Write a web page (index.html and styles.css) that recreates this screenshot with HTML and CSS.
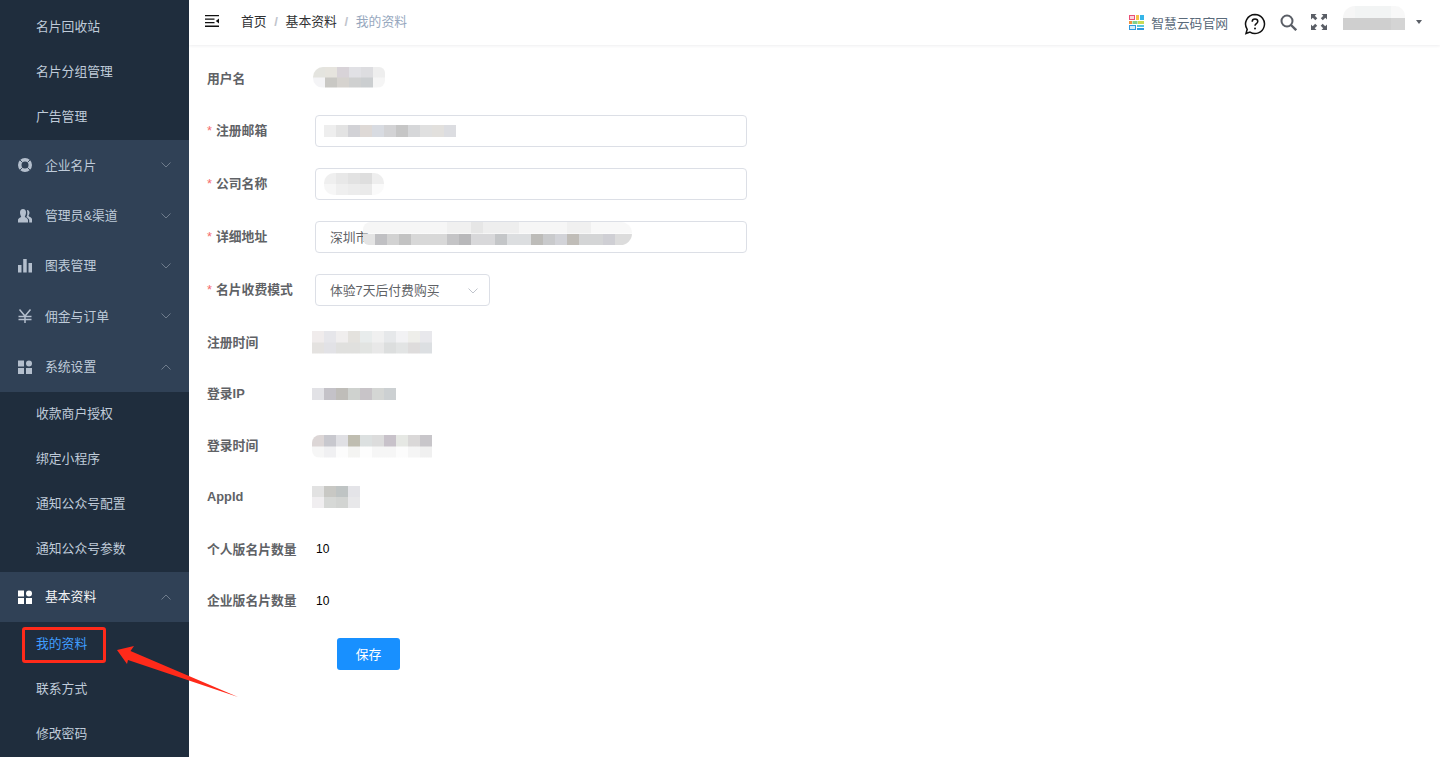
FILE: index.html
```html
<!DOCTYPE html>
<html lang="zh-CN">
<head>
    <meta charset="UTF-8">
    <title>我的资料</title>
    <link rel="stylesheet" href="styles.css">
</head>
<body>
    <!-- 侧边栏 -->
    <aside class="sidebar">
        <ul class="sub-menu sub-menu-first">
            <li>名片回收站</li>
            <li>名片分组管理</li>
            <li>广告管理</li>
        </ul>
        <div class="menu-title">
            <svg class="menu-icon" viewBox="0 0 14 14"><path fill="#b4bfcd" fill-rule="evenodd" d="M7 0a7 7 0 1 1 0 14A7 7 0 0 1 7 0zm0 3.500a3.500 3.500 0 1 0 0 7 3.500 3.500 0 0 0 0-7z"/><path stroke="#304156" stroke-width="0.9" d="M1.500 1.500l3 3M12.500 1.500l-3 3M1.500 12.500l3-3M12.500 12.500l-3-3"/></svg>
            <span>企业名片</span>
            <svg class="menu-arrow" viewBox="0 0 10 6"><path d="M.5.500L5 5 9.500.5"/></svg>
        </div>
        <div class="menu-title">
            <svg class="menu-icon" viewBox="0 0 14 14"><path fill="#b4bfcd" d="M5 0c2 0 3 1.500 3 3.500S7.200 6.800 6.800 7.600c0 1 3 1.400 3.200 3.400v2.500H0V11c.2-2 3.200-2.400 3.200-3.400C2.800 6.800 2 5.500 2 3.500S3 0 5 0zM9 1c1.800.2 2.600 1.500 2.500 3-.1 1.200-.7 2-1 2.700 0 .9 2.800 1.300 3.500 3.300v3.500h-2.800V11c-.3-1.400-2-2.300-2.800-3 .7-1 1.300-2.700.6-7z"/></svg>
            <span>管理员&amp;渠道</span>
            <svg class="menu-arrow" viewBox="0 0 10 6"><path d="M.5.500L5 5 9.500.5"/></svg>
        </div>
        <div class="menu-title">
            <svg class="menu-icon" viewBox="0 0 14 14"><path fill="#b4bfcd" d="M0 6h3.500v7.500H0zM5.200 0h3.500v13.500H5.200zM10.500 4H14v9.500h-3.500z"/></svg>
            <span>图表管理</span>
            <svg class="menu-arrow" viewBox="0 0 10 6"><path d="M.5.500L5 5 9.500.5"/></svg>
        </div>
        <div class="menu-title">
            <svg class="menu-icon" viewBox="0 0 14 14"><path fill="none" stroke="#b4bfcd" stroke-width="1.500" d="M1.500.5L7 7 12.500.5M7 7v7M.5 7.500h13M.5 10.500h13"/></svg>
            <span>佣金与订单</span>
            <svg class="menu-arrow" viewBox="0 0 10 6"><path d="M.5.500L5 5 9.500.5"/></svg>
        </div>
        <div class="menu-title">
            <svg class="menu-icon" viewBox="0 0 14 14"><path fill="#b4bfcd" d="M0 .5h6v6H0zM0 8h6v6H0zM8 8h6v6H8z"/><circle fill="#b4bfcd" cx="11" cy="3.500" r="3"/></svg>
            <span>系统设置</span>
            <svg class="menu-arrow" viewBox="0 0 10 6"><path d="M.5 5.500L5 1l4.500 4.500"/></svg>
        </div>
        <ul class="sub-menu">
            <li>收款商户授权</li>
            <li>绑定小程序</li>
            <li>通知公众号配置</li>
            <li>通知公众号参数</li>
        </ul>
        <div class="menu-title menu-title-active">
            <svg class="menu-icon" viewBox="0 0 14 14"><path fill="#fff" d="M0 .5h6v6H0zM0 8h6v6H0zM8 8h6v6H8z"/><circle fill="#fff" cx="11" cy="3.500" r="3"/></svg>
            <span>基本资料</span>
            <svg class="menu-arrow" viewBox="0 0 10 6"><path d="M.5 5.500L5 1l4.500 4.500"/></svg>
        </div>
        <ul class="sub-menu">
            <li class="active">我的资料</li>
            <li>联系方式</li>
            <li>修改密码</li>
        </ul>
    </aside>

    <div class="main">
        <!-- 顶部栏 -->
        <header class="navbar">
            <svg class="hamburger" viewBox="0 0 14 12"><path fill="#111" d="M0 0h14v1.300H0zM0 3.500h9.500v1.300H0zM0 7h9.500v1.300H0zM0 10.500h14V12H0zM14 3.500v5L10.800 6z"/></svg>
            <nav class="breadcrumb">
                <span class="crumb">首页</span>
                <span class="sep">/</span>
                <span class="crumb">基本资料</span>
                <span class="sep">/</span>
                <span class="crumb crumb-last">我的资料</span>
            </nav>
            <div class="navbar-right">
                <a class="site-link">
                    <svg class="site-logo" viewBox="0 0 15 15">
                        <rect x="0.500" y="0.500" width="5" height="4" fill="#fbd3dd" stroke="#ea4f76"/>
                        <rect x="7" y="0" width="3" height="5" fill="#f4c04a"/>
                        <rect x="11" y="0" width="4" height="5" fill="#35b5e8"/>
                        <rect x="0" y="6" width="3" height="3" fill="#f0913f"/>
                        <rect x="3.500" y="6" width="5" height="3" fill="#7fcf8c"/>
                        <rect x="9" y="6" width="6" height="3" fill="#c9da55"/>
                        <rect x="0.500" y="10.500" width="6" height="4" fill="#d3ecfa" stroke="#3199dd"/>
                        <rect x="8" y="10" width="7" height="2" fill="#58c6dc"/>
                        <rect x="8" y="13" width="7" height="2" fill="#3199dd"/>
                    </svg>
                    智慧云码官网
                </a>
                <svg class="help-icon" viewBox="0 0 22 22"><path fill="none" stroke="#111" stroke-width="1.500" d="M11 1.500a9.500 9.500 0 1 1-5 17.600L2 20.500l1.200-4.200A9.500 9.500 0 0 1 11 1.500z"/><path fill="none" stroke="#111" stroke-width="1.500" d="M8.200 8.700c0-1.700 1.300-2.700 2.800-2.700s2.800 1 2.800 2.500c0 2-2.800 2.300-2.800 4.300"/><circle cx="11" cy="15.600" r="1" fill="#111"/></svg>
                <svg class="search-icon" viewBox="0 0 17 17"><circle cx="7" cy="7" r="5.500" fill="none" stroke="#5a5e66" stroke-width="2"/><path stroke="#5a5e66" stroke-width="2.400" d="M11 11l5.200 5.200"/></svg>
                <svg class="full-icon" viewBox="0 0 16 16"><path fill="#5a5e66" d="M0 0h5.500L3.800 1.700l2.500 2.500-2 2-2.500-2.500L0 5.500zM16 0v5.500l-1.700-1.700-2.500 2.500-2-2 2.500-2.500L10.500 0zM0 16v-5.500l1.700 1.700 2.500-2.500 2 2-2.500 2.500L5.500 16zM16 16h-5.500l1.700-1.700-2.500-2.500 2-2 2.500 2.500 1.800-1.800z"/></svg>
                <div class="user-box">
                    <div class="mosaic mosaic-user"></div>
                    <span class="caret"></span>
                </div>
            </div>
        </header>

        <!-- 表单 -->
        <form class="info-form">
            <div class="form-row">
                <label class="form-label">用户名</label>
                <div class="mosaic mosaic-name"></div>
            </div>
            <div class="form-row">
                <label class="form-label required">注册邮箱</label>
                <div class="form-input"><div class="mosaic mosaic-mail"></div></div>
            </div>
            <div class="form-row">
                <label class="form-label required">公司名称</label>
                <div class="form-input"><div class="mosaic mosaic-company"></div></div>
            </div>
            <div class="form-row">
                <label class="form-label required">详细地址</label>
                <div class="form-input">深圳市<div class="mosaic mosaic-address"></div></div>
            </div>
            <div class="form-row form-row-last-input">
                <label class="form-label required">名片收费模式</label>
                <div class="form-input form-select">
                    体验7天后付费购买
                    <svg class="select-arrow" viewBox="0 0 10 6"><path d="M.5.500L5 5 9.500.5"/></svg>
                </div>
            </div>
            <div class="form-row form-row-text">
                <label class="form-label">注册时间</label>
                <div class="mosaic mosaic-regtime"></div>
            </div>
            <div class="form-row form-row-text">
                <label class="form-label">登录IP</label>
                <div class="mosaic mosaic-ip"></div>
            </div>
            <div class="form-row form-row-text">
                <label class="form-label">登录时间</label>
                <div class="mosaic mosaic-logintime"></div>
            </div>
            <div class="form-row form-row-text">
                <label class="form-label">AppId</label>
                <div class="mosaic mosaic-appid"></div>
            </div>
            <div class="form-row form-row-text">
                <label class="form-label">个人版名片数量</label>
                <span class="form-value">10</span>
            </div>
            <div class="form-row">
                <label class="form-label">企业版名片数量</label>
                <span class="form-value">10</span>
            </div>
            <button type="button" class="save-btn">保存</button>
        </form>
    </div>

    <!-- 截图上的红色标注 -->
    <div class="mark-box"></div>
    <svg class="mark-arrow" viewBox="0 0 130 62"><polygon fill="#ff2a1a" points="0,15 17,11 13.500,16 121,62 11,25 10,29"/></svg>
</body>
</html>
```

FILE: styles.css
```css
/* リセット */
* {
    box-sizing: border-box;
    margin: 0;
    padding: 0;
}
html, body {
    height: 757px;
    overflow: hidden;
}
body {
    display: flex;
    font-family: "Liberation Sans", "Noto Sans CJK SC", sans-serif;
    font-size: 12.8px;
    background-color: #fff;
    color: #606266;
}

/* sidebar */
.sidebar {
    width: 189px;
    flex-shrink: 0;
    height: 757px;
    overflow: hidden;
    background-color: #1f2d3d;
    color: #bfcbd9;
}
.sub-menu {
    list-style: none;
    background-color: #1f2d3d;
}
.sub-menu-first {
    padding-top: 5px;
}
.sub-menu li {
    height: 45px;
    line-height: 43px;
    padding-left: 36px;
}
.sub-menu li.active {
    color: #409eff;
}
.menu-title {
    display: flex;
    align-items: center;
    height: 50.4px;
    padding: 0 18px 0 18px;
    background-color: #304156;
}
.menu-title-active {
    height: 50px;
    color: #f4f4f5;
}
.menu-title span {
    margin: 0 0 2px 13px;
    flex: 1;
}
.menu-icon {
    width: 14px;
    height: 14px;
}
.menu-arrow {
    width: 10px;
    height: 6px;
}
.menu-arrow path,
.select-arrow path {
    fill: none;
    stroke: #6f7c8c;
    stroke-width: 1;
}

/* navbar */
.main {
    flex: 1;
    min-width: 0;
}
.navbar {
    display: flex;
    align-items: center;
    height: 45px;
    padding: 0 0 3px 16px;
    background-color: #fff;
    box-shadow: 0 1px 3px rgba(0, 21, 41, 0.07);
}
.hamburger {
    width: 14px;
    height: 12px;
}
.breadcrumb {
    display: flex;
    align-items: center;
    margin: 0 0 2px 22px;
    color: #303133;
}
.sep {
    margin: 0 7.7px;
    padding-top: 2px;
    font-size: 13px;
    font-weight: 700;
    color: #c0c4cc;
}
.crumb-last {
    color: #97a8be;
}
.navbar-right {
    display: flex;
    align-items: center;
    margin: 2px 0 0 auto;
}
.site-link {
    display: flex;
    align-items: center;
    color: #5a6a7a;
}
.site-logo {
    width: 15px;
    height: 15px;
    margin-right: 7px;
}
.help-icon {
    width: 22px;
    height: 22px;
    margin-left: 16px;
    margin-top: 4px;
}
.search-icon {
    width: 17px;
    height: 17px;
    margin-left: 14px;
}
.full-icon {
    width: 16px;
    height: 16px;
    margin-left: 14px;
}
.user-box {
    display: flex;
    align-items: center;
    margin-left: 16px;
    padding-right: 18px;
}
.caret {
    margin-left: 11px;
    border-top: 4px solid #5a5e66;
    border-left: 3.5px solid transparent;
    border-right: 3.5px solid transparent;
}

/* form */
.info-form {
    padding: 17px 0 0 18px;
}
.form-row {
    display: flex;
    align-items: center;
    height: 32px;
    margin-bottom: 21px;
}
.form-row-last-input {
    margin-bottom: 20px;
}
.form-row-text {
    margin-bottom: 19.8px;
}
.form-label {
    width: 108px;
    flex-shrink: 0;
    font-weight: 700;
    color: #606266;
    position: relative;
    top: -1px;
}
.required {
    top: -2px;
}
.required::before {
    content: "*";
    margin-right: 4px;
    color: #f56c6c;
    font-weight: 400;
}
.form-input {
    display: flex;
    align-items: center;
    width: 432px;
    height: 32px;
    padding: 0 0 2px 14px;
    border: 1px solid #dcdfe6;
    border-radius: 4px;
    background-color: #fff;
    color: #606266;
}
.form-select {
    width: 175px;
    justify-content: space-between;
    padding-right: 11px;
}
.select-arrow {
    width: 10px;
    height: 6px;
    margin-top: 3px;
}
.select-arrow path {
    stroke: #c0c4cc;
}
.form-value {
    font-size: 12px;
    color: #000;
    margin-left: 1px;
}
.save-btn {
    display: block;
    width: 63px;
    height: 32px;
    margin-left: 130px;
    border: none;
    border-radius: 3px;
    background-color: #1890ff;
    color: #fff;
    font-family: inherit;
    font-size: 12.8px;
}

/* モザイク */
.mosaic {
    flex-shrink: 0;
    background-repeat: no-repeat;
    background-position: 0 0, 0 100%;
    background-size: 100% 50%;
}
.mosaic-name {
    width: 72px;
    height: 21px;
    margin: -2px 0 0 -2px;
    border-radius: 10px 6px 8px 10px;
    background-image:
        linear-gradient(90deg, #e4e4df 0 12px, #e6e4de 0 24px, #d8d3d8 0 36px, #e1e1e5 0 48px, #dddde0 0 60px, #eeeeee 0 72px),
        linear-gradient(90deg, #f4f4f6 0 12px, #c9c8c4 0 24px, #d6d3cf 0 36px, #cfd0d0 0 48px, #cbced0 0 60px, #f5f5f5 0 72px);
}
.mosaic-mail {
    width: 132px;
    height: 12px;
    margin: 2px 0 0 -6px;
    background-image: linear-gradient(90deg, #eeeeee 0 12px, #e3e3e3 0 24px, #d2d2d6 0 36px, #ded9d6 0 48px, #d8dbe1 0 60px, #d3d3d5 0 72px, #c6c6c6 0 84px, #d6d7d9 0 96px, #e0e0e0 0 108px, #e2e0dd 0 120px, #dcdde1 0 132px);
    background-size: 100% 100%;
}
.mosaic-company {
    width: 60px;
    height: 22px;
    margin: 1px 0 0 -6px;
    border-radius: 10px;
    background-image:
        linear-gradient(90deg, #efefef 0 12px, #e8e8e8 0 24px, #e2e2e2 0 36px, #dedede 0 48px, #eeeeee 0 60px),
        linear-gradient(90deg, #f6f6f6 0 12px, #efefef 0 24px, #ececec 0 36px, #eaeaea 0 48px, #fafafa 0 60px);
}
.mosaic-address {
    width: 269px;
    height: 23px;
    margin: -5px 0 0 -5.4px;
    border-radius: 8px 12px 12px 6px;
    background-image:
        linear-gradient(90deg, #f6f6f6 0 84px, #f0f0f0 0 108px, #e6e6e6 0 120px, #eeeeee 0 156px, #f6f6f6 0 204px, #f0f0f0 0 228px, #f8f8f8 0 269px),
        linear-gradient(90deg, #e4e4e4 0 12px, #c0c0c3 0 24px, #d2d2d2 0 36px, #c3c3c3 0 48px, #d8d8d8 0 84px, #c4c4c6 0 96px, #b8b8ba 0 108px, #d8d8da 0 132px, #c4c6c8 0 144px, #dcdee0 0 168px, #bdbcb9 0 180px, #c9cacc 0 192px, #d2d3d8 0 204px, #c0bdb8 0 216px, #d4d5d6 0 240px, #cfcfd4 0 252px, #dcdcdc 0 269px);
}
.mosaic-regtime,
.mosaic-logintime {
    width: 120px;
    height: 23px;
    margin-left: -3px;
}
.mosaic-regtime {
    background-image:
        linear-gradient(90deg, #f0ecec 0 12px, #e6e6ea 0 24px, #f0eeee 0 36px, #e4e2de 0 48px, #e8ecec 0 60px, #f0f0f0 0 72px, #e6e8ea 0 84px, #f2f2f4 0 96px, #eeeeea 0 108px, #e8e8ec 0 120px),
        linear-gradient(90deg, #e4e2e0 0 12px, #e2e2e6 0 24px, #e0e0de 0 48px, #e2e4e2 0 60px, #e8e8e8 0 72px, #dcdede 0 84px, #e2e4e4 0 96px, #dedcdc 0 108px, #dcdfe2 0 120px);
}
.mosaic-ip {
    width: 84px;
    height: 12px;
    margin-left: -3px;
    background-size: 100% 100%;
    background-image: linear-gradient(90deg, #e2e2e6 0 12px, #c4c2c8 0 24px, #bfbdb9 0 36px, #cfd2cf 0 48px, #c8c4c8 0 60px, #d4d6d4 0 72px, #ccd0d2 0 84px);
}
.mosaic-logintime {
    margin-top: 1px;
    border-radius: 8px 0 0 8px;
    background-image:
        linear-gradient(90deg, #dcd6d6 0 12px, #c8c8ce 0 24px, #e0e0e4 0 36px, #bfbdb0 0 48px, #dce0e0 0 60px, #dcdcdc 0 72px, #c8c2ca 0 84px, #e6e8e4 0 96px, #dad8d8 0 108px, #c8c6ca 0 120px),
        linear-gradient(90deg, #f6f6f6 0 12px, #f0f0f2 0 24px, #fcfcfc 0 36px, #f4f4f2 0 48px, #fdfdfd 0 60px, #f6f6f6 0 84px, #fcfcfc 0 96px, #f5f5f5 0 108px, #f0f0f0 0 120px);
}
.mosaic-appid {
    width: 48px;
    height: 22px;
    margin-left: -3px;
    background-image:
        linear-gradient(90deg, #e2e2e2 0 12px, #c8c8c4 0 24px, #bfc4c4 0 36px, #e4e4e8 0 48px),
        linear-gradient(90deg, #f0eef0 0 12px, #d6d8d6 0 24px, #d2d4d2 0 36px, #e8e8ea 0 48px);
}
.mosaic-user {
    width: 62px;
    height: 24px;
    margin-top: -8px;
    border-radius: 12px 10px 0 0;
    background-image:
        linear-gradient(90deg, #f6f6f6 0 12px, #f2f4f4 0 48px, #f8f8f8 0 62px),
        linear-gradient(90deg, #cfcfcf 0 48px, #d4d4d4 0 62px);
}

/* 标注 */
.mark-box {
    position: absolute;
    left: 22px;
    top: 627px;
    width: 84px;
    height: 36px;
    border: 3px solid #ff2a1a;
    border-radius: 3px;
}
.mark-arrow {
    position: absolute;
    left: 117px;
    top: 635px;
    width: 130px;
    height: 62px;
    overflow: visible;
}
```
